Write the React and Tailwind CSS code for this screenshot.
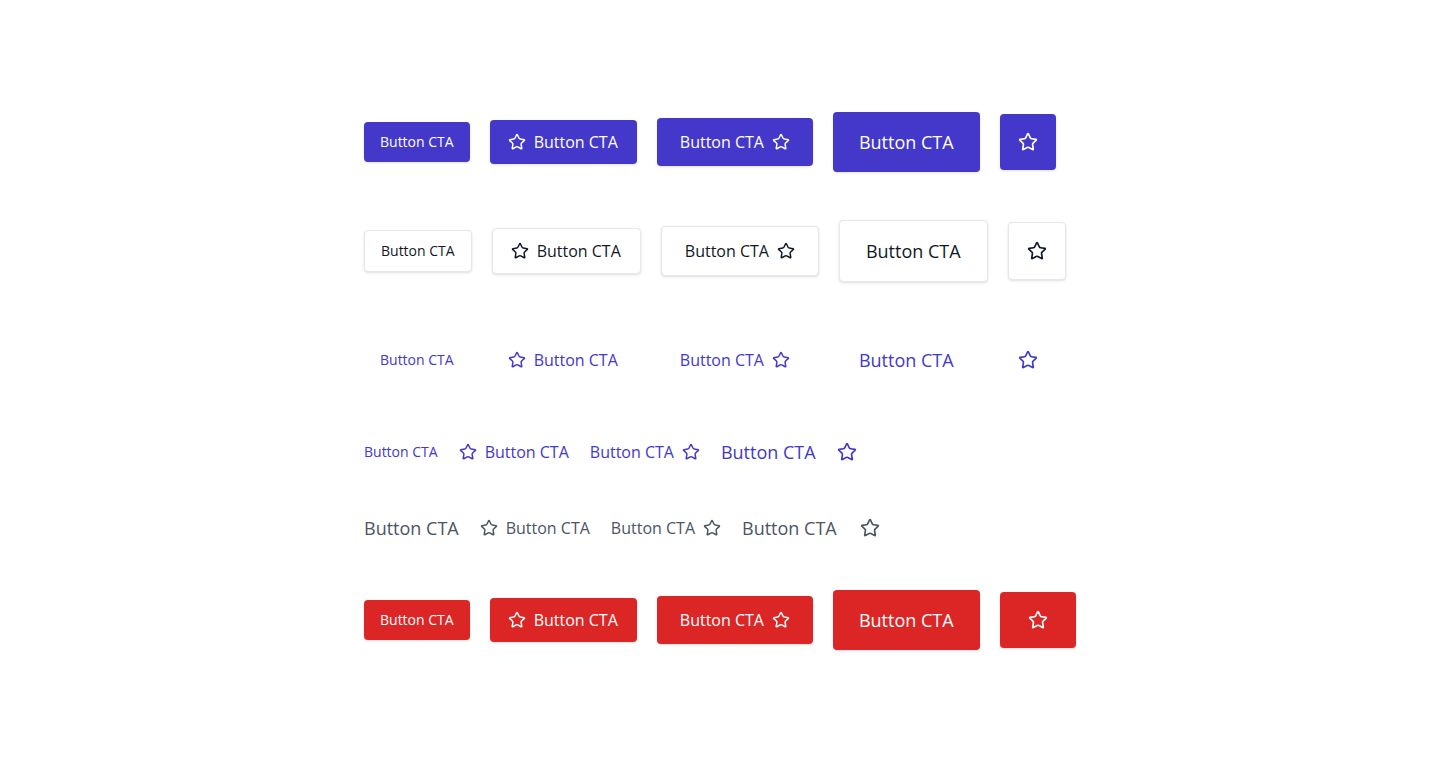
import { Star } from 'lucide-react';

const font = { fontFamily: '"Open Sans", "Noto Sans", sans-serif' };

const tones = {
  primary: 'bg-[#4338ca] text-white shadow-sm',
  outline: 'bg-white text-[#111827] border border-[#e5e7eb] shadow-sm',
  ghost: 'bg-transparent text-[#4338ca]',
  danger: 'bg-[#dc2626] text-white shadow-sm',
};

function ButtonRow({ tone, wideIcon }) {
  const t = tones[tone];
  return (
    <div className="flex items-center gap-5">
      <button className={`${t} rounded px-4 py-2.5 text-sm leading-5`}>Button CTA</button>
      <button className={`${t} flex items-center gap-2 rounded pl-[18px] pr-[19px] py-2.5 text-base leading-6`}>
        <Star size={18} strokeWidth={2} />
        Button CTA
      </button>
      <button className={`${t} flex items-center gap-2 rounded px-[23px] py-3 text-base leading-6`}>
        Button CTA
        <Star size={18} strokeWidth={2} />
      </button>
      <button className={`${t} rounded px-[26px] py-4 text-lg leading-7`}>Button CTA</button>
      <button className={`${t} flex items-center justify-center rounded py-[18px] ${wideIcon ? 'px-[28px]' : 'px-[18px]'}`}>
        <Star size={20} strokeWidth={2} />
      </button>
    </div>
  );
}

export default function App() {
  return (
    <div className="min-h-screen bg-white" style={font}>
      <div className="flex flex-col items-start gap-12 pl-[364px] pt-[112px]">
        <ButtonRow tone="primary" />
        <ButtonRow tone="outline" />
        <ButtonRow tone="ghost" />

        <div className="flex h-7 items-center gap-[21px] text-[#4338ca]">
          <span className="text-sm leading-5">Button CTA</span>
          <span className="flex items-center gap-2 text-base leading-6">
            <Star size={18} strokeWidth={2} />
            Button CTA
          </span>
          <span className="flex items-center gap-2 text-base leading-6">
            Button CTA
            <Star size={18} strokeWidth={2} />
          </span>
          <span className="text-lg leading-7">Button CTA</span>
          <Star size={20} strokeWidth={2} />
        </div>

        <div className="flex h-7 items-center gap-[21px] text-[#4b5563]">
          <span className="text-lg leading-7">Button CTA</span>
          <span className="flex items-center gap-2 text-base leading-6">
            <Star size={18} strokeWidth={2} />
            Button CTA
          </span>
          <span className="flex items-center gap-2 text-base leading-6">
            Button CTA
            <Star size={18} strokeWidth={2} />
          </span>
          <span className="text-lg leading-7">Button CTA</span>
          <Star size={20} strokeWidth={2} className="ml-[2px]" />
        </div>

        <ButtonRow tone="danger" wideIcon />
      </div>
    </div>
  );
}
